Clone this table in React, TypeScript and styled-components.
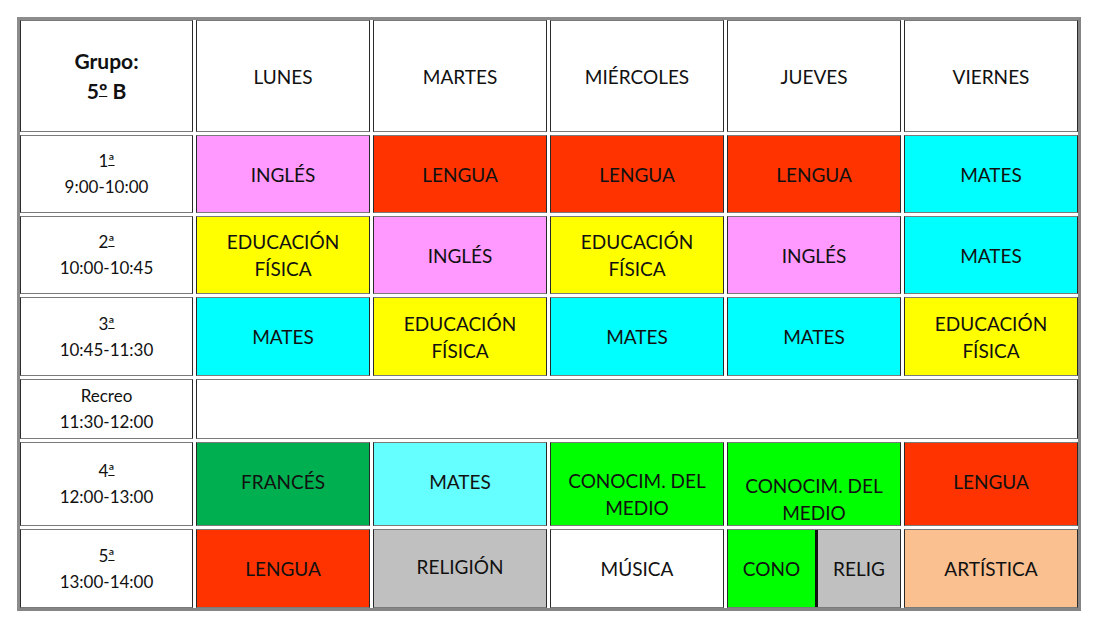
import React from "react";
import styled, { createGlobalStyle } from "styled-components";

const Global = createGlobalStyle`
  html, body { margin: 0; padding: 0; background: #ffffff; }
  body { font-family: Lato, "Open Sans", sans-serif; color: #111; }
`;

const Page = styled.div`
  padding: 17px 0 0 17px;
`;

const Table = styled.div`
  display: grid;
  width: 1058px;
  grid-template-columns: 173px repeat(5, 174px);
  grid-template-rows: 112px 78px 78px 79px 60px 84px 79px;
  gap: 3px;
  border: 3px solid #858585;
  border-top-color: #8c8c8c;
  border-left-color: #8c8c8c;
  background: #ffffff;
`;

const Cell = styled.div<{ $bg?: string; $bold?: boolean; $size?: number; $lh?: number; $shift?: number; $span?: number }>`
  box-sizing: border-box;
  display: flex;
  align-items: center;
  justify-content: center;
  text-align: center;
  background: ${(p) => p.$bg || "#ffffff"};
  border-style: solid;
  border-width: 1px;
  border-color: #7a7a7a #2a2a2a #7a7a7a #2a2a2a;
  font-size: ${(p) => p.$size || 19}px;
  line-height: ${(p) => p.$lh || 27}px;
  font-weight: ${(p) => (p.$bold ? 700 : 400)};
  color: #111;
  padding-top: ${(p) => (p.$shift && p.$shift > 0 ? p.$shift * 2 : 0)}px;
  padding-bottom: ${(p) => (p.$shift && p.$shift < 0 ? -p.$shift * 2 : 0)}px;
  ${(p) => (p.$span ? `grid-column: span ${p.$span};` : "")}
`;

const Ord = styled.span`
  text-decoration: underline;
  text-decoration-thickness: 1px;
  text-underline-offset: -0.12em;
`;

const Split = styled.div`
  box-sizing: border-box;
  display: flex;
  border: 1px solid #7a7a7a;
  border-left-color: #2a2a2a;
  border-right-color: #2a2a2a;
`;

const Half = styled.div<{ $bg: string; $w: number; $divider?: boolean }>`
  box-sizing: border-box;
  width: ${(p) => p.$w}px;
  flex: none;
  display: flex;
  align-items: center;
  justify-content: center;
  background: ${(p) => p.$bg};
  font-size: 19px;
  line-height: 27px;
  color: #111;
  ${(p) => (p.$divider ? "border-left: 3px solid #111; flex: 1;" : "")}
`;

const C = {
  ingles: "#ff99ff",
  lengua: "#ff3300",
  mates: "#00ffff",
  mates2: "#66ffff",
  ef: "#ffff00",
  frances: "#00b050",
  cono: "#00ff00",
  relig: "#c0c0c0",
  art: "#fac090",
  white: "#ffffff",
};

type Sub = { t: React.ReactNode; bg: string; shift?: number };

const EF = (
  <>
    EDUCACIÓN
    <br />
    FÍSICA
  </>
);
const CM = (
  <>
    CONOCIM. DEL
    <br />
    MEDIO
  </>
);

const days = ["LUNES", "MARTES", "MIÉRCOLES", "JUEVES", "VIERNES"];

const Label = ({ n, time }: { n: React.ReactNode; time: string }) => (
  <Cell $size={17} $lh={26}>
    <span>
      {n}
      <br />
      {time}
    </span>
  </Cell>
);

const rows: { n: React.ReactNode; time: string; subs: Sub[] | "recreo" }[] = [
  {
    n: <>1<Ord>ª</Ord></>,
    time: "9:00-10:00",
    subs: [
      { t: "INGLÉS", bg: C.ingles },
      { t: "LENGUA", bg: C.lengua },
      { t: "LENGUA", bg: C.lengua },
      { t: "LENGUA", bg: C.lengua },
      { t: "MATES", bg: C.mates },
    ],
  },
  {
    n: <>2<Ord>ª</Ord></>,
    time: "10:00-10:45",
    subs: [
      { t: EF, bg: C.ef },
      { t: "INGLÉS", bg: C.ingles },
      { t: EF, bg: C.ef },
      { t: "INGLÉS", bg: C.ingles },
      { t: "MATES", bg: C.mates },
    ],
  },
  {
    n: <>3<Ord>ª</Ord></>,
    time: "10:45-11:30",
    subs: [
      { t: "MATES", bg: C.mates },
      { t: EF, bg: C.ef },
      { t: "MATES", bg: C.mates },
      { t: "MATES", bg: C.mates },
      { t: EF, bg: C.ef },
    ],
  },
  {
    n: "Recreo",
    time: "11:30-12:00",
    subs: "recreo",
  },
  {
    n: <>4<Ord>ª</Ord></>,
    time: "12:00-13:00",
    subs: [
      { t: "FRANCÉS", bg: C.frances, shift: -3 },
      { t: "MATES", bg: C.mates2, shift: -3 },
      { t: CM, bg: C.cono, shift: 10 },
      { t: CM, bg: C.cono, shift: 15 },
      { t: "LENGUA", bg: C.lengua, shift: -3 },
    ],
  },
];

const last: Sub[] = [
  { t: "LENGUA", bg: C.lengua },
  { t: "RELIGIÓN", bg: C.relig, shift: -2 },
  { t: "MÚSICA", bg: C.white },
];

export default function App() {
  return (
    <Page>
      <Global />
      <Table>
        <Cell $bold $size={21} $lh={30}>
          <span>
            Grupo:
            <br />
            5<Ord>º</Ord> B
          </span>
        </Cell>
        {days.map((d) => (
          <Cell key={d}>{d}</Cell>
        ))}
        {rows.map((r, i) => (
          <React.Fragment key={i}>
            <Label n={r.n} time={r.time} />
            {r.subs === "recreo" ? (
              <Cell $span={5} />
            ) : (
              r.subs.map((s, j) => (
                <Cell key={j} $bg={s.bg} $shift={s.shift}>
                  <span>{s.t}</span>
                </Cell>
              ))
            )}
          </React.Fragment>
        ))}
        <Label n={<>5<Ord>ª</Ord></>} time="13:00-14:00" />
        {last.map((s, j) => (
          <Cell key={j} $bg={s.bg} $shift={s.shift}>
            {s.t}
          </Cell>
        ))}
        <Split>
          <Half $bg={C.cono} $w={87}>
            CONO
          </Half>
          <Half $bg={C.relig} $w={84} $divider>
            RELIG
          </Half>
        </Split>
        <Cell $bg={C.art}>ARTÍSTICA</Cell>
      </Table>
    </Page>
  );
}
